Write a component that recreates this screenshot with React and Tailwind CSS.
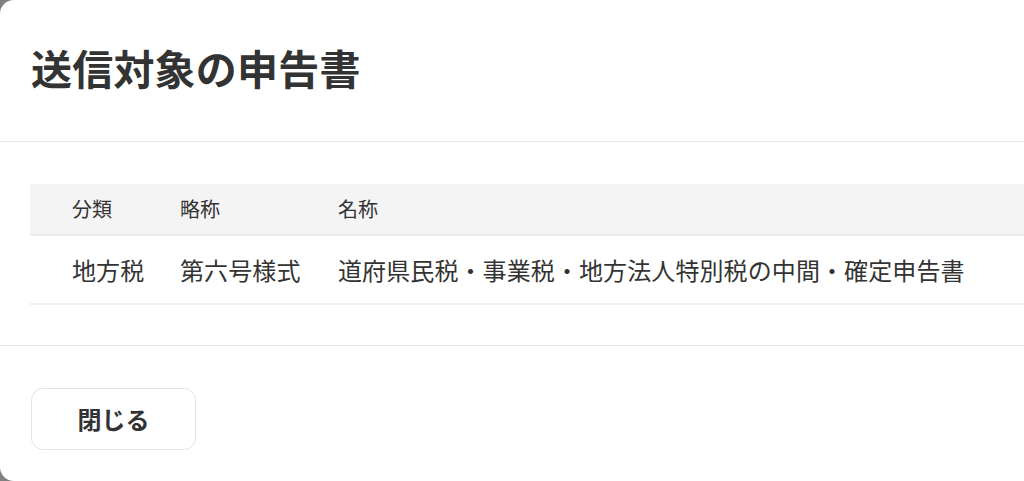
export default function App() {
  const font = { fontFamily: '"Noto Sans CJK JP", "Noto Sans", sans-serif' };
  return (
    <div className="w-[1024px] h-[481px] overflow-hidden bg-[#808080]" style={font}>
      <div className="w-[1120px] h-[481px] bg-white rounded-[14px] flex flex-col text-[#333333]">
        <div className="h-[142px] shrink-0 flex items-center px-[31px] pb-[6px] border-b border-[#e6e6e6]">
          <h1 className="text-[41px] font-bold leading-none tracking-[0.2px]">送信対象の申告書</h1>
        </div>
        <div className="pt-[42px] pb-[40px] px-[30px] border-b border-[#e6e6e6]">
          <div className="grid grid-cols-[108px_158px_1fr] pl-[42px] h-[52px] items-center bg-[#f4f4f4] border-b-2 border-[#ececec] text-[20px] leading-none">
            <div>分類</div>
            <div>略称</div>
            <div>名称</div>
          </div>
          <div className="grid grid-cols-[108px_158px_1fr] pl-[42px] h-[69px] items-center border-b-2 border-[#f0f0f0] text-[24px] leading-none tracking-[0.1px]">
            <div>地方税</div>
            <div>第六号様式</div>
            <div>道府県民税・事業税・地方法人特別税の中間・確定申告書</div>
          </div>
        </div>
        <div className="pt-[42px] px-[31px]">
          <button className="w-[165px] h-[62px] rounded-[12px] border border-[#e3e3e3] bg-white flex items-center justify-center text-[24px] font-bold leading-none text-[#333333]">
            閉じる
          </button>
        </div>
      </div>
    </div>
  );
}
